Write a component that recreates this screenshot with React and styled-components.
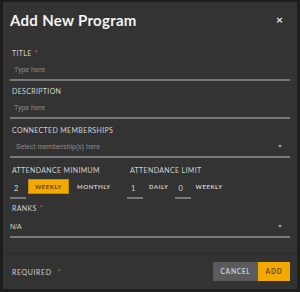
import React from 'react';
import styled, { createGlobalStyle } from 'styled-components';

const GlobalStyle = createGlobalStyle`
  html, body {
    margin: 0;
    padding: 0;
    background: #1d1d1d;
  }
  body {
    font-family: Lato, "Open Sans", "Liberation Sans", sans-serif;
  }
`;

const Modal = styled.div`
  box-sizing: border-box;
  margin: 2px 3px;
  width: 294px;
  height: 287px;
  background: #333333;
  display: flex;
  flex-direction: column;
`;

const Header = styled.div`
  display: flex;
  align-items: center;
  justify-content: space-between;
  padding: 9px 14px 0 7px;
  height: 18px;
`;

const Title = styled.h2`
  margin: 0;
  font-size: 15px;
  line-height: 18px;
  font-weight: 700;
  color: #f2f2f2;
  letter-spacing: 0.3px;
`;

const Close = styled.span`
  font-size: 12px;
  font-weight: 700;
  color: #e8e8e8;
  line-height: 12px;
`;

const Body = styled.div`
  padding: 19px 7px 0 7px;
  flex: 1;
`;

const Field = styled.div`
  margin-bottom: ${(p) => p.gap || 5}px;
`;

const Label = styled.div`
  font-size: 7px;
  line-height: 10px;
  letter-spacing: 0.35px;
  color: #d2d2d2;
  padding-left: ${(p) => p.indent || 2}px;
  margin-bottom: 2px;
  white-space: nowrap;
`;

const Star = styled.span`
  color: #d9622b;
  margin-left: ${(p) => p.gap || 3}px;
`;

const InputLine = styled.div`
  display: flex;
  align-items: center;
  justify-content: space-between;
  height: 19px;
  margin-top: ${(p) => p.mt || 0}px;
  border-bottom: 2px solid #797979;
  padding: ${(p) => p.pt || 0}px 8px 0 ${(p) => p.indent ?? 4}px;
  box-sizing: content-box;
  font-family: "Liberation Sans", Arial, sans-serif;
  font-size: 7px;
  color: ${(p) => (p.value ? '#d6d6d6' : '#8c8c8c')};
`;

const Caret = styled.span`
  width: 0;
  height: 0;
  border-left: 2.5px solid transparent;
  border-right: 2.5px solid transparent;
  border-top: 3px solid #9a9a9a;
`;

const AttendanceRow = styled.div`
  display: flex;
  margin-bottom: 7px;
`;

const AttendanceGroup = styled.div`
  width: ${(p) => p.width}px;
`;

const Controls = styled.div`
  display: flex;
  align-items: center;
  height: 19px;
  margin-top: 2px;
`;

const NumberBox = styled.div`
  box-sizing: border-box;
  width: 16px;
  height: 19px;
  line-height: 17px;
  margin-left: ${(p) => p.ml || 0}px;
  margin-top: 6px;
  border-bottom: 2px solid #797979;
  padding-left: 4px;
  font-size: 7.5px;
  color: #d6d6d6;
`;

const Toggle = styled.div`
  box-sizing: border-box;
  height: 15px;
  line-height: 13px;
  margin-left: ${(p) => p.ml}px;
  padding: 0 ${(p) => p.px}px;
  font-size: 6px;
  font-weight: 700;
  letter-spacing: 0.55px;
  color: ${(p) => (p.active ? '#5a3f00' : '#cfcfcf')};
  background: ${(p) => (p.active ? '#f2a900' : 'transparent')};
  border: 1px solid ${(p) => (p.active ? '#c48a00' : 'transparent')};
`;

const Footer = styled.div`
  display: flex;
  align-items: center;
  justify-content: space-between;
  border-top: 1px solid #2b2b2b;
  height: 35px;
  padding: 0 7px 0 9px;
`;

const Required = styled.div`
  font-size: 7px;
  letter-spacing: 0.6px;
  color: #cfcfcf;
`;

const Buttons = styled.div`
  display: flex;
`;

const Button = styled.button`
  border: none;
  height: 19px;
  width: ${(p) => p.w}px;
  padding: 0;
  font-family: inherit;
  font-size: 6.5px;
  font-weight: 700;
  letter-spacing: 0.8px;
  color: ${(p) => (p.primary ? '#6a4a00' : '#cfcfcf')};
  background: ${(p) => (p.primary ? '#f2a900' : '#5b5b5b')};
`;

export default function App() {
  return (
    <>
      <GlobalStyle />
      <Modal>
        <Header>
          <Title>Add New Program</Title>
          <Close>×</Close>
        </Header>
        <Body>
          <Field>
            <Label>
              TITLE
              <Star>*</Star>
            </Label>
            <InputLine>Type here</InputLine>
          </Field>
          <Field gap={6}>
            <Label>DESCRIPTION</Label>
            <InputLine>Type here</InputLine>
          </Field>
          <Field gap={7}>
            <Label>CONNECTED MEMBERSHIPS</Label>
            <InputLine indent={6}>
              Select membership(s) here
              <Caret />
            </InputLine>
          </Field>
          <AttendanceRow>
            <AttendanceGroup width={117}>
              <Label>ATTENDANCE MINIMUM</Label>
              <Controls>
                <NumberBox>2</NumberBox>
                <Toggle active ml={2} px={6}>WEEKLY</Toggle>
                <Toggle ml={1} px={6}>MONTHLY</Toggle>
              </Controls>
            </AttendanceGroup>
            <AttendanceGroup width={160}>
              <Label indent={3}>ATTENDANCE LIMIT</Label>
              <Controls>
                <NumberBox>1</NumberBox>
                <Toggle ml={0} px={5}>DAILY</Toggle>
                <NumberBox>0</NumberBox>
                <Toggle ml={0} px={4}>WEEKLY</Toggle>
              </Controls>
            </AttendanceGroup>
          </AttendanceRow>
          <Field>
            <Label>
              RANKS
              <Star>*</Star>
            </Label>
            <InputLine value indent={0} mt={1} pt={2}>
              N/A
              <Caret />
            </InputLine>
          </Field>
        </Body>
        <Footer>
          <Required>
            REQUIRED
            <Star gap={6}>*</Star>
          </Required>
          <Buttons>
            <Button w={45}>CANCEL</Button>
            <Button primary w={32}>ADD</Button>
          </Buttons>
        </Footer>
      </Modal>
    </>
  );
}
